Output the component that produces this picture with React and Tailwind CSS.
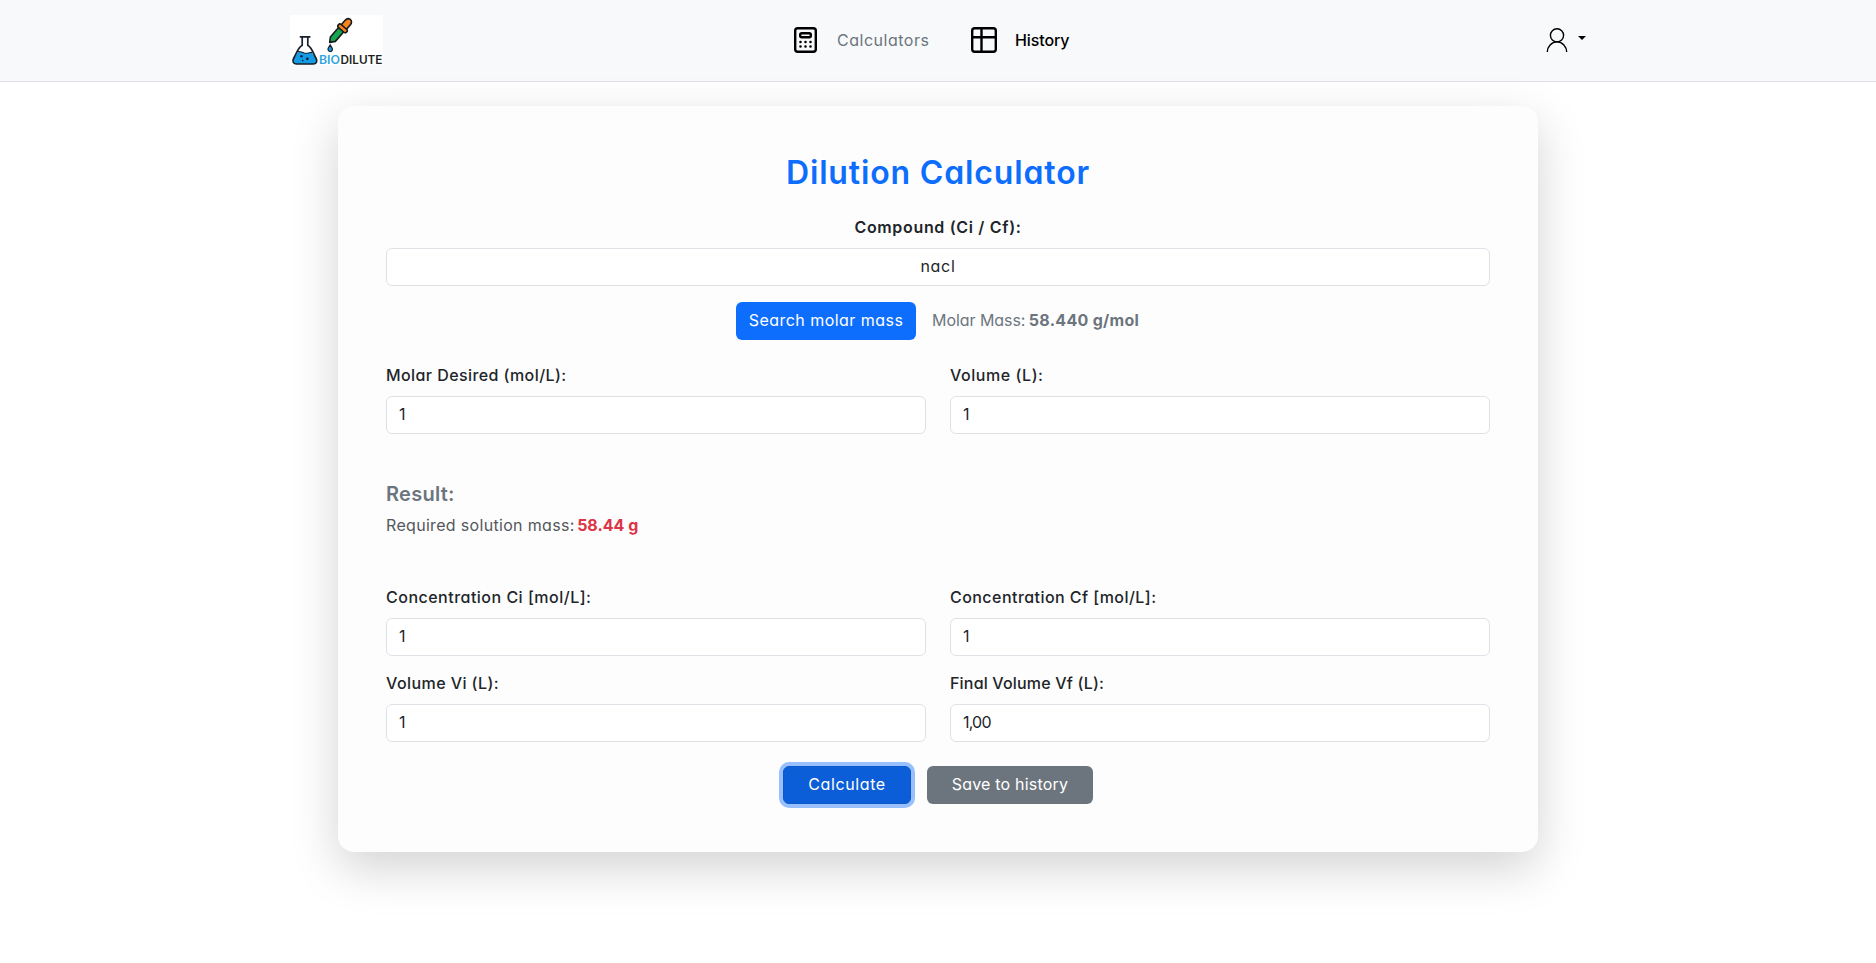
function Logo() {
  return (
    <svg width="93" height="50" viewBox="0 0 93 50" className="block shrink-0 overflow-visible" role="img">
      <rect width="93" height="50" fill="#ffffff" />
      <path d="M8 37.2c2.600-1.200 4.800.6 7 1 2.300.4 4-.5 6.700-.9l4.300 6.300c1.800 3 0 5.500-2.800 5.500H6.600c-2.800 0-4.900-2.500-2.900-5.500z" fill="#149be3" />
      <path d="M12.200 22v8.300C8 32.500 6.300 39 3.700 43.200c-2 3.200-.1 5.800 2.900 5.800h16.600c3 0 4.800-2.600 2.800-5.800C23.400 39 22 32.500 17.800 30.300V22M10.400 21.800h9.400" fill="none" stroke="#16202a" strokeWidth="1.700" strokeLinecap="round" strokeLinejoin="round" />
      <path d="M7.200 36.800c2.600-1.200 4.900.9 7.400 1.400 2.500.4 5-.7 7.900-1.100" fill="none" stroke="#16202a" strokeWidth="1.100" />
      <circle cx="11.500" cy="41.300" r="1.200" fill="#10263a" />
      <circle cx="17.300" cy="43.800" r="1.400" fill="#10263a" />
      <circle cx="12.800" cy="45.600" r=".8" fill="#10263a" />
      <g transform="translate(39.700 27.400) rotate(41)" stroke="#151b1e" strokeWidth="1.600" strokeLinejoin="round">
        <path d="M0 0l-3-4.500V-18h6.600V-4.500z" fill="#17a650" />
        <path d="M-2.900-20v-6.500c0-5.800 7-5.800 7 0v6.500z" fill="#f5831f" />
        <rect x="-5" y="-21" width="11" height="4" rx="1.900" fill="#f5831f" />
      </g>
      <path d="M40.200 29.900c1.300 1.900 2.200 3.100 2.200 4.400a2.200 2.200 0 0 1-4.400 0c0-1.300.9-2.500 2.200-4.400z" fill="#149be3" stroke="#16202a" strokeWidth="1.200" />
      <text x="29" y="49" fontSize="11.500" fontWeight="600" textLength="21" lengthAdjust="spacingAndGlyphs" fill="#2fa4e2" className="font-['Inter',sans-serif]">BIO</text>
      <text x="50.500" y="49" fontSize="11.500" fontWeight="600" textLength="42" lengthAdjust="spacingAndGlyphs" fill="#1b1f22" className="font-['Inter',sans-serif]">DILUTE</text>
    </svg>
  );
}

function CalculatorIcon() {
  return (
    <svg width="23" height="26" viewBox="0 0 23 26" className="block shrink-0" fill="none" stroke="#000">
      <rect x="1.200" y="1.200" width="20.600" height="23.600" rx="2.500" strokeWidth="2.400" />
      <rect x="6.200" y="6.300" width="10.600" height="3.900" rx="1.500" strokeWidth="2.400" />
      <path d="M6.500 15h.01M11.500 15h.01M16.500 15h.01M6.500 19.500h.01M11.500 19.500h.01M16.500 19.500h.01" strokeWidth="2.600" strokeLinecap="round" />
    </svg>
  );
}

function TableIcon() {
  return (
    <svg width="26" height="26" viewBox="0 0 26 26" className="block shrink-0" fill="none" stroke="#000" strokeWidth="2.400">
      <rect x="1.200" y="1.200" width="23.600" height="23.600" rx="2.500" />
      <path d="M10.500 1v24M1 10.300h24" />
    </svg>
  );
}

function UserIcon() {
  return (
    <svg width="22" height="26" viewBox="0 0 22 26" className="block shrink-0" fill="none" stroke="#000" strokeWidth="1.400">
      <circle cx="11" cy="8.300" r="6.600" />
      <path d="M1.300 25c0-5.400 4.300-10.100 9.700-10.100s9.700 4.700 9.700 10.100" />
    </svg>
  );
}

function Field({ label, value, labelClass, inputClass = "" }) {
  return (
    <label className="block min-w-0">
      <span className={"mb-[10px] block whitespace-nowrap font-medium leading-[22px] " + labelClass}>{label}</span>
      <input
        type="text"
        defaultValue={value}
        className={"block h-[38px] w-full rounded-md border border-[#dee2e6] bg-white px-3 pb-0.5 text-base text-[#212529] outline-none " + inputClass}
      />
    </label>
  );
}

export default function App() {
  return (
    <div className="min-h-[963px] overflow-hidden bg-white font-['Inter',sans-serif] text-base leading-6 text-[#212529] [font-feature-settings:'cv11']">
      <header className="border-b border-[#dee2e6] bg-[#f8f9fa]">
        <nav className="mx-auto flex h-[81px] w-[1296px] items-center pb-0.5">
          <Logo />
          <a className="ml-[411px] flex items-center text-[#6c757d]">
            <CalculatorIcon />
            <span className="ml-5 w-[93px] whitespace-nowrap tracking-[0.52px]">Calculators</span>
          </a>
          <a className="ml-[41px] flex items-center font-medium text-black">
            <TableIcon />
            <span className="ml-[18px] whitespace-nowrap tracking-[-0.1px]">History</span>
          </a>
          <button type="button" className="ml-auto flex items-center gap-[10px]">
            <UserIcon />
            <span className="mb-[3px] size-0 border-x-[4.8px] border-t-[4.8px] border-x-transparent border-t-black" />
          </button>
        </nav>
      </header>

      <main className="mx-auto mt-6 w-[1200px] rounded-2xl bg-[#fdfdfd] p-12 shadow-[0_16px_48px_rgba(0,0,0,0.175)]">
        <h1 className="mb-6 text-center text-[32px] font-semibold leading-[38px] tracking-[0.85px] text-[#0d6efd]">Dilution Calculator</h1>

        <Field label="Compound (Ci / Cf):" value="nacl" labelClass="text-center font-semibold tracking-[0.67px]" inputClass="text-center tracking-[0.7px]" />

        <div className="mt-4 flex h-[38px] items-center justify-center gap-4">
          <button type="button" className="h-[38px] w-[180px] whitespace-nowrap rounded-md bg-[#0d6efd] pb-0.5 tracking-[0.46px] text-white">Search molar mass</button>
          <p className="w-[208px] whitespace-nowrap pb-0.5 text-[#6c757d]">
            <span className="tracking-[-0.06px]">Molar Mass:</span>{" "}
            <strong className="-ml-px font-bold tracking-[0.28px]">58.440 g/mol</strong>
          </p>
        </div>

        <div className="mt-6 grid grid-cols-2 gap-6">
          <Field label="Molar Desired (mol/L):" value="1" labelClass="tracking-[0.42px]" />
          <Field label="Volume (L):" value="1" labelClass="tracking-[0.55px]" />
        </div>

        <section className="my-12">
          <h2 className="mb-2 text-xl font-semibold leading-6 tracking-[0.27px] text-[#6c757d]">Result:</h2>
          <p className="pb-0.5 leading-[22px] text-[#54585c]">
            <span className="tracking-[0.32px]">Required solution mass:</span>{" "}
            <strong className="-ml-0.5 font-bold text-[#dc3545]">58.44 g</strong>
          </p>
        </section>

        <div className="grid grid-cols-2 gap-x-6 gap-y-4">
          <Field label="Concentration Ci [mol/L]:" value="1" labelClass="tracking-[0.49px]" />
          <Field label="Concentration Cf [mol/L]:" value="1" labelClass="tracking-[0.45px]" />
          <Field label="Volume Vi (L):" value="1" labelClass="tracking-[0.43px]" />
          <Field label="Final Volume Vf (L):" value="1,00" labelClass="tracking-[0.18px]" inputClass="tracking-[-0.8px]" />
        </div>

        <div className="mt-6 flex justify-center gap-4">
          <button type="button" className="h-[38px] w-[128px] whitespace-nowrap rounded-md border border-[#0a58ca] bg-[#0b5ed7] pb-0.5 tracking-[0.62px] text-white shadow-[0_0_0_4px_#98c0fe]">Calculate</button>
          <button type="button" className="h-[38px] w-[166px] whitespace-nowrap rounded-md bg-[#6c757d] pb-0.5 tracking-[0.21px] text-white">Save to history</button>
        </div>
      </main>
    </div>
  );
}
